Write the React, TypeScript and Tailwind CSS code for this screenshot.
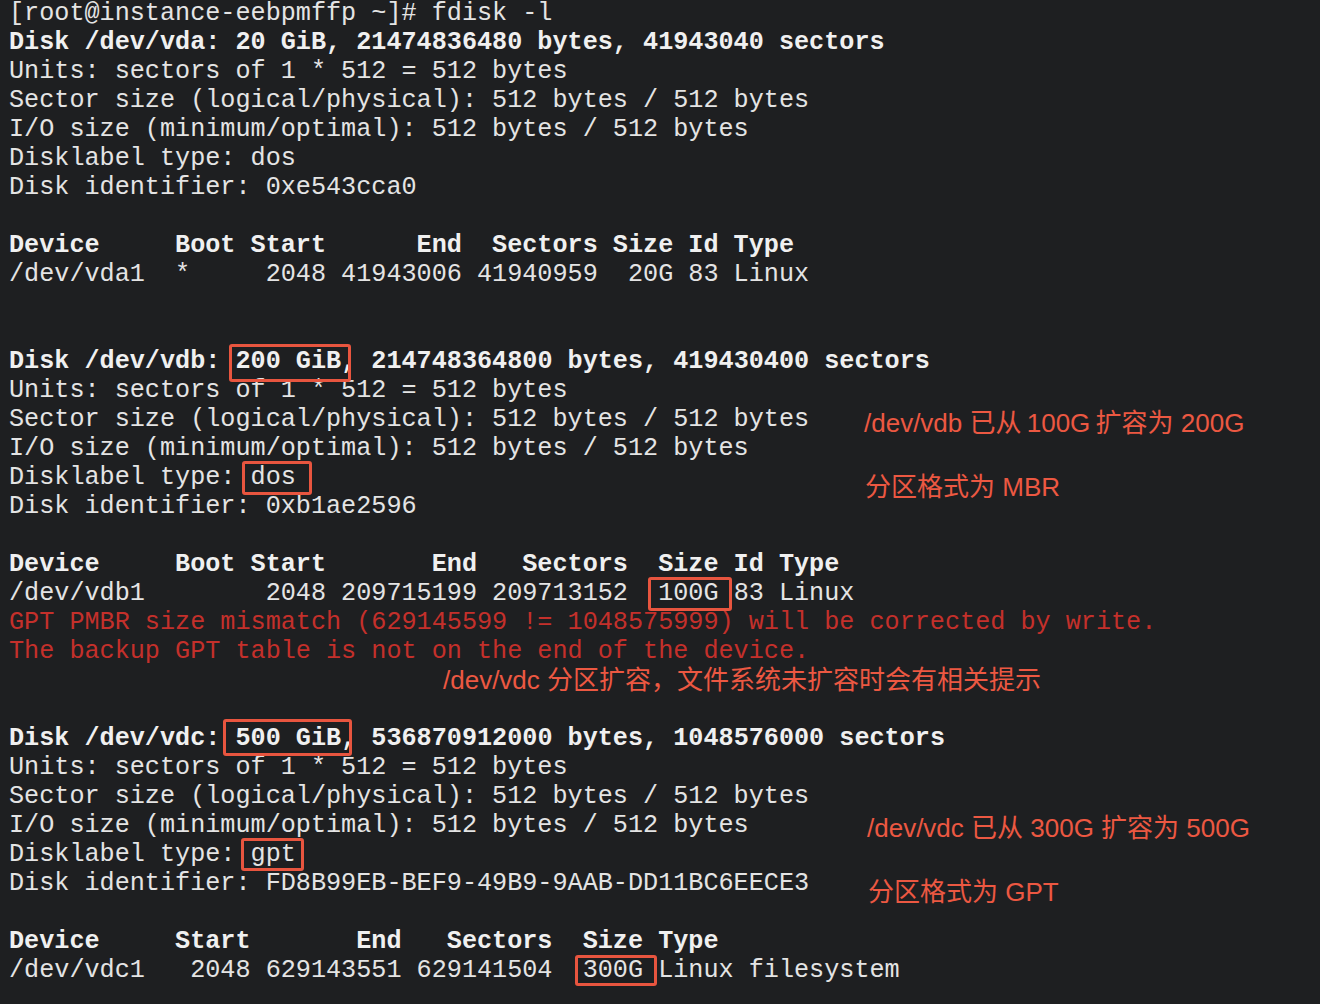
import React from "react";

type LineProps = { children?: React.ReactNode; bold?: boolean; red?: boolean };

const Line = ({ children, bold, red }: LineProps) => (
  <div
    className={`h-[29px] leading-[29px] whitespace-pre ${bold ? "font-bold text-[#f0f0f0]" : ""} ${red ? "text-[#c4302b]" : ""}`}
  >
    {children}
  </div>
);

// red frame drawn over a piece of terminal text
const Boxed = ({ children, frame }: { children: React.ReactNode; frame: string }) => (
  <span className="relative inline-block h-[29px]">
    {children}
    <span
      className={`pointer-events-none absolute rounded-[3px] border-[3px] border-[#e8553f] ${frame}`}
    />
  </span>
);

const Note = ({ children, className }: { children: React.ReactNode; className: string }) => (
  <div
    className={`absolute whitespace-pre text-[26px] leading-[30px] text-[#ec5842] font-['Liberation_Sans','Noto_Sans_CJK_SC',sans-serif] ${className}`}
  >
    {children}
  </div>
);

const App = () => {
  return (
    <div className="relative w-[1320px] h-[1004px] overflow-hidden bg-[#1e1f21] text-[#e4e4e4]">
      <div className="-mt-[1px] pl-[9px] text-[25.17px] font-['Liberation_Mono',monospace]">
        <Line>[root@instance-eebpmffp ~]# fdisk -l</Line>
        <Line bold>Disk /dev/vda: 20 GiB, 21474836480 bytes, 41943040 sectors</Line>
        <Line>Units: sectors of 1 * 512 = 512 bytes</Line>
        <Line>Sector size (logical/physical): 512 bytes / 512 bytes</Line>
        <Line>I/O size (minimum/optimal): 512 bytes / 512 bytes</Line>
        <Line>Disklabel type: dos</Line>
        <Line>Disk identifier: 0xe543cca0</Line>
        <Line />
        <Line bold>Device     Boot Start      End  Sectors Size Id Type</Line>
        <Line>/dev/vda1  *     2048 41943006 41940959  20G 83 Linux</Line>
        <Line />
        <Line />
        <Line bold>
          Disk /dev/vdb: <Boxed frame="-left-[6px] -right-[10px] -top-[3px] -bottom-[6px]">200 GiB</Boxed>, 214748364800 bytes, 419430400 sectors
        </Line>
        <Line>Units: sectors of 1 * 512 = 512 bytes</Line>
        <Line>Sector size (logical/physical): 512 bytes / 512 bytes</Line>
        <Line>I/O size (minimum/optimal): 512 bytes / 512 bytes</Line>
        <Line>
          Disklabel type: <Boxed frame="-left-[9px] -right-[16px] -top-[2px] -bottom-[3px]">dos</Boxed>
        </Line>
        <Line>Disk identifier: 0xb1ae2596</Line>
        <Line />
        <Line bold>Device     Boot Start       End   Sectors  Size Id Type</Line>
        <Line>
          /dev/vdb1        2048 209715199 209713152  <Boxed frame="-left-[10px] -right-[13px] -top-[2px] -bottom-[3px]">100G</Boxed> 83 Linux
        </Line>
        <Line red>GPT PMBR size mismatch (629145599 != 1048575999) will be corrected by write.</Line>
        <Line red>The backup GPT table is not on the end of the device.</Line>
        <Line />
        <Line />
        <Line bold>
          Disk /dev/vdc: <Boxed frame="-left-[12px] -right-[11px] -top-[5px] -bottom-[3px]">500 GiB</Boxed>, 536870912000 bytes, 1048576000 sectors
        </Line>
        <Line>Units: sectors of 1 * 512 = 512 bytes</Line>
        <Line>Sector size (logical/physical): 512 bytes / 512 bytes</Line>
        <Line>I/O size (minimum/optimal): 512 bytes / 512 bytes</Line>
        <Line>
          Disklabel type: <Boxed frame="-left-[10px] -right-[8px] -top-[2px] -bottom-[2px]">gpt</Boxed>
        </Line>
        <Line>Disk identifier: FD8B99EB-BEF9-49B9-9AAB-DD11BC6EECE3</Line>
        <Line />
        <Line bold>Device     Start       End   Sectors  Size Type</Line>
        <Line>
          /dev/vdc1   2048 629143551 629141504  <Boxed frame="-left-[8px] -right-[14px] -top-[1px] -bottom-[1px]">300G</Boxed> Linux filesystem
        </Line>
      </div>

      <Note className="left-[864px] top-[408px]">/dev/vdb 已从{"\u2009"}100G{"\u2009"}扩容为 200G</Note>
      <Note className="left-[865px] top-[472px]">分区格式为 MBR</Note>
      <Note className="left-[443px] top-[665px]">/dev/vdc 分区扩容，文件系统未扩容时会有相关提示</Note>
      <Note className="left-[867px] top-[813px]">/dev/vdc 已从 300G 扩容为 500G</Note>
      <Note className="left-[868px] top-[877px]">分区格式为 GPT</Note>
    </div>
  );
};

export default App;
